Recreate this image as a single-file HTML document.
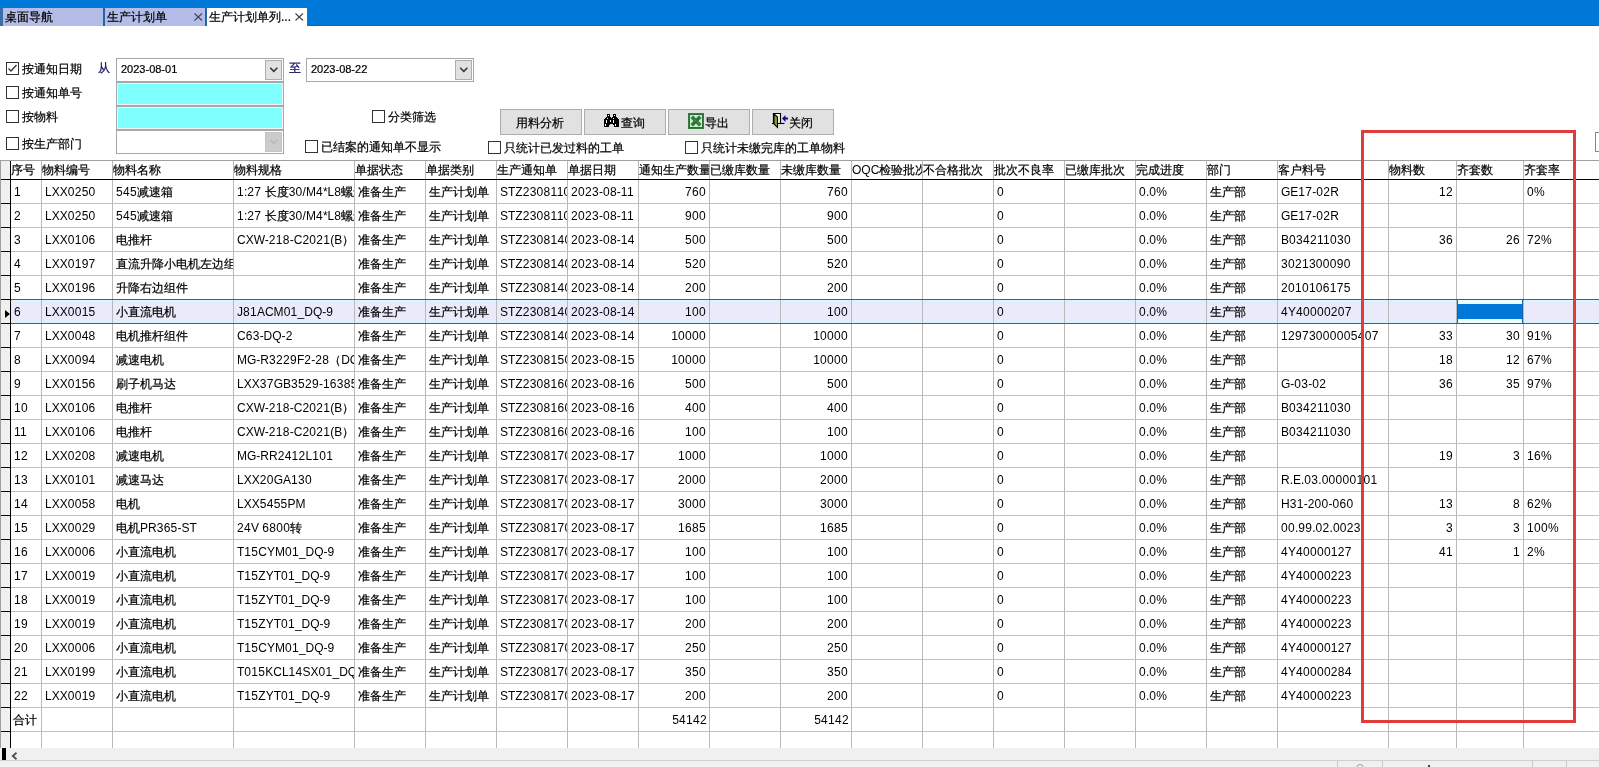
<!DOCTYPE html><html><head><meta charset="utf-8"><style>

*{box-sizing:border-box}
html,body{margin:0;padding:0}
body{width:1599px;height:767px;overflow:hidden;position:relative;background:#fff;font-family:"Liberation Sans",sans-serif;font-size:12px;color:#000;-webkit-text-stroke:0.22px #000}
.a{position:absolute}
.l{-webkit-text-stroke:0}
.d{letter-spacing:0.3px}
.t{position:absolute;white-space:nowrap;line-height:14px}
.cb{position:absolute;width:13px;height:13px;border:1px solid #333;background:#fff}
.btn{position:absolute;width:82px;height:26px;background:#e1e1e1;border:1px solid #adadad}
.vl{position:absolute;width:1px;background:#b9b9b9}
.hl{position:absolute;height:1px;background:#c3c3c3}
.c{position:absolute;white-space:nowrap;overflow:hidden;height:23px;line-height:25px}

</style></head><body><div id="w" style="position:absolute;left:0;top:0;width:1599px;height:767px;will-change:transform">
<div class="a" style="left:0;top:0;width:1599px;height:26px;background:#0078d7"></div>
<div class="a" style="left:0;top:8px;width:3px;height:18px;background:#3a6ea8"></div>
<div class="a" style="left:307px;top:25px;width:1292px;height:1px;background:#2a609c"></div>
<div class="a" style="left:3px;top:8px;width:100px;height:18px;background:#b4bde8"></div>
<div class="a" style="left:103px;top:8px;width:2px;height:18px;background:#2466a0"></div>
<div class="a" style="left:105px;top:8px;width:100px;height:18px;background:#b4bde8"></div>
<div class="a" style="left:205px;top:8px;width:2px;height:18px;background:#2466a0"></div>
<div class="a" style="left:207px;top:8px;width:100px;height:18px;background:#fff"></div>
<div class="t" style="left:5px;top:10px">桌面导航</div>
<div class="t" style="left:107px;top:10px">生产计划单</div>
<div class="t" style="left:209px;top:10px">生产计划单列...</div>
<svg class="a" style="left:194px;top:13px" width="9" height="9" viewBox="0 0 9 9"><path d="M0.5 0.5L8 7.5M8 0.5L0.5 7.5" stroke="#444" stroke-width="1.1" style="-webkit-text-stroke:0"/></svg>
<svg class="a" style="left:295px;top:13px" width="9" height="9" viewBox="0 0 9 9"><path d="M0.5 0.5L8 7.5M8 0.5L0.5 7.5" stroke="#444" stroke-width="1.1" style="-webkit-text-stroke:0"/></svg>
<div class="cb" style="left:6px;top:62px"></div><svg class="a" style="left:6px;top:62px" width="13" height="13" viewBox="0 0 13 13"><path d="M2.5 6.5L5 9L10.5 3" stroke="#333" stroke-width="1.3" fill="none"/></svg>
<div class="t" style="left:22px;top:62px;">按通知日期</div>
<div class="cb" style="left:6px;top:86px"></div>
<div class="t" style="left:22px;top:86px;">按通知单号</div>
<div class="cb" style="left:6px;top:110px"></div>
<div class="t" style="left:22px;top:110px;">按物料</div>
<div class="cb" style="left:6px;top:137px"></div>
<div class="t" style="left:22px;top:137px;">按生产部门</div>
<div class="t" style="left:98px;top:61px;color:#0c0cb4">从</div>
<div class="t" style="left:289px;top:61px;color:#0c0cb4">至</div>
<div class="a" style="left:116px;top:58px;width:168px;height:24px;border:1px solid #a8a8a8;background:#fff"></div><div class="a" style="left:265px;top:60px;width:17px;height:20px;background:#e1e1e1;border:1px solid #adadad"></div><svg class="a" style="left:269px;top:67px" width="10" height="6" viewBox="0 0 10 6"><path d="M1.2 0.8L4.8 4.4L8.4 0.8" stroke="#333" stroke-width="1.5" fill="none"/></svg><div class="t" style="left:121px;top:62px;font-size:11px">2023-08-01</div>
<div class="a" style="left:306px;top:58px;width:168px;height:24px;border:1px solid #a8a8a8;background:#fff"></div><div class="a" style="left:455px;top:60px;width:17px;height:20px;background:#e1e1e1;border:1px solid #adadad"></div><svg class="a" style="left:459px;top:67px" width="10" height="6" viewBox="0 0 10 6"><path d="M1.2 0.8L4.8 4.4L8.4 0.8" stroke="#333" stroke-width="1.5" fill="none"/></svg><div class="t" style="left:311px;top:62px;font-size:11px">2023-08-22</div>
<div class="a" style="left:116px;top:82px;width:168px;height:24px;border:1px solid #a8a8a8;box-shadow:inset 0 0 0 1px #f4f0f4;background:#80ffff"></div>
<div class="a" style="left:116px;top:106px;width:168px;height:24px;border:1px solid #a8a8a8;box-shadow:inset 0 0 0 1px #f4f0f4;background:#80ffff"></div>
<div class="a" style="left:116px;top:130px;width:168px;height:24px;border:1px solid #a8a8a8;background:#fff"></div><div class="a" style="left:265px;top:132px;width:17px;height:20px;background:#cccccc;border:1px solid #c4c4c4"></div><svg class="a" style="left:269px;top:139px" width="10" height="6" viewBox="0 0 10 6"><path d="M1.2 0.8L4.8 4.4L8.4 0.8" stroke="#b8b8b8" stroke-width="1.5" fill="none"/></svg>
<div class="cb" style="left:372px;top:110px"></div>
<div class="t" style="left:388px;top:110px;">分类筛选</div>
<div class="cb" style="left:305px;top:140px"></div>
<div class="t" style="left:321px;top:140px;">已结案的通知单不显示</div>
<div class="cb" style="left:488px;top:141px"></div>
<div class="t" style="left:504px;top:141px;">只统计已发过料的工单</div>
<div class="cb" style="left:685px;top:141px"></div>
<div class="t" style="left:701px;top:141px;">只统计未缴完库的工单物料</div>
<div class="btn" style="left:500px;top:109px"></div>
<div class="t" style="left:516px;top:116px;">用料分析</div>
<div class="btn" style="left:584px;top:109px"></div>
<div class="t" style="left:621px;top:116px;">查询</div>
<div class="btn" style="left:668px;top:109px"></div>
<div class="t" style="left:705px;top:116px;">导出</div>
<div class="btn" style="left:752px;top:109px"></div>
<div class="t" style="left:789px;top:116px;">关闭</div>
<svg class="a" style="left:604px;top:114px" width="15" height="13" viewBox="0 0 15 13" shape-rendering="crispEdges"><rect x="3" y="0" width="3" height="3" fill="#000"/><rect x="9" y="0" width="3" height="3" fill="#000"/><rect x="2" y="3" width="5" height="1" fill="#000"/><rect x="8" y="3" width="5" height="1" fill="#000"/><rect x="1" y="4" width="13" height="1" fill="#000"/><rect x="0" y="5" width="15" height="5" fill="#000"/><rect x="0" y="10" width="5" height="3" fill="#000"/><rect x="10" y="10" width="5" height="3" fill="#000"/><rect x="5" y="10" width="1" height="1" fill="#000"/><rect x="9" y="10" width="1" height="1" fill="#000"/><rect x="4" y="1" width="1" height="1" fill="#fff"/><rect x="10" y="1" width="1" height="1" fill="#fff"/><rect x="3" y="4" width="1" height="1" fill="#fff"/><rect x="9" y="4" width="1" height="1" fill="#fff"/><rect x="2" y="6" width="1" height="3" fill="#fff"/><rect x="6" y="6" width="1" height="2" fill="#fff"/><rect x="9" y="6" width="1" height="3" fill="#fff"/><rect x="1" y="10" width="1" height="2" fill="#fff"/><rect x="11" y="10" width="1" height="2" fill="#fff"/></svg>
<svg class="a" style="left:688px;top:113px" width="16" height="16" viewBox="0 0 16 16">
<rect x="0" y="0" width="16" height="16" fill="#2c6e38"/>
<rect x="0.5" y="0.5" width="15" height="15" fill="none" stroke="#3f8a4a" stroke-width="1" stroke-dasharray="1 1"/>
<rect x="2" y="2" width="12" height="12" fill="#c2f0c4"/>
<path d="M3.8 3.8L12.2 12.2M12.2 3.8L3.8 12.2" stroke="#2c7236" stroke-width="3.4"/>
<path d="M4.5 4.5L11 11" stroke="#6cc07a" stroke-width="0.8" stroke-dasharray="1 1"/>
</svg>
<svg class="a" style="left:769px;top:110px" width="22" height="21" viewBox="0 0 22 21">
<path d="M4.5 13.5V3.5H11.5V13.5" stroke="#000" stroke-width="1.2" fill="#fbfbf5"/>
<path d="M3 13.5H15.5" stroke="#000" stroke-width="1.1"/>
<path d="M5 4L8.5 7V17.5L5 14Z" fill="#8e9c22" stroke="#000" stroke-width="1.1"/>
<path d="M13 8.5L16.5 5V7.5H19V9.5H16.5V12Z" fill="#0e0e88"/>
</svg>
<div class="a" style="left:1595px;top:132px;width:10px;height:20px;border:1px solid #888;background:#fff"></div>
<div class="a" style="left:0;top:160px;width:1599px;height:1px;background:#a0a0a0"></div>
<div class="a" style="left:0;top:161px;width:10px;height:587px;background:#f0f0f0"></div>
<div class="a" style="left:0;top:161px;width:1px;height:587px;background:#a0a0a0"></div>
<div class="a" style="left:11px;top:299px;width:1588px;height:24px;background:#eaeafa"></div>
<div class="a" style="left:11px;top:300px;width:1588px;height:1px;background:#d4f6ff"></div>
<div class="a" style="left:11px;top:322px;width:1588px;height:1px;background:#d4f6ff"></div>
<div class="vl" style="left:41px;top:161px;height:587px"></div>
<div class="vl" style="left:112px;top:161px;height:587px"></div>
<div class="vl" style="left:233px;top:161px;height:587px"></div>
<div class="vl" style="left:354px;top:161px;height:587px"></div>
<div class="vl" style="left:425px;top:161px;height:587px"></div>
<div class="vl" style="left:496px;top:161px;height:587px"></div>
<div class="vl" style="left:567px;top:161px;height:587px"></div>
<div class="vl" style="left:638px;top:161px;height:587px"></div>
<div class="vl" style="left:709px;top:161px;height:587px"></div>
<div class="vl" style="left:780px;top:161px;height:587px"></div>
<div class="vl" style="left:851px;top:161px;height:587px"></div>
<div class="vl" style="left:922px;top:161px;height:587px"></div>
<div class="vl" style="left:993px;top:161px;height:587px"></div>
<div class="vl" style="left:1064px;top:161px;height:587px"></div>
<div class="vl" style="left:1135px;top:161px;height:587px"></div>
<div class="vl" style="left:1206px;top:161px;height:587px"></div>
<div class="vl" style="left:1277px;top:161px;height:587px"></div>
<div class="vl" style="left:1388px;top:161px;height:587px"></div>
<div class="vl" style="left:1456px;top:161px;height:587px"></div>
<div class="vl" style="left:1523px;top:161px;height:587px"></div>
<div class="c" style="left:11px;top:161px;width:30px;height:18px;line-height:18px">序号</div>
<div class="c" style="left:42px;top:161px;width:70px;height:18px;line-height:18px">物料编号</div>
<div class="c" style="left:113px;top:161px;width:120px;height:18px;line-height:18px">物料名称</div>
<div class="c" style="left:234px;top:161px;width:120px;height:18px;line-height:18px">物料规格</div>
<div class="c" style="left:355px;top:161px;width:70px;height:18px;line-height:18px">单据状态</div>
<div class="c" style="left:426px;top:161px;width:70px;height:18px;line-height:18px">单据类别</div>
<div class="c" style="left:497px;top:161px;width:70px;height:18px;line-height:18px">生产通知单</div>
<div class="c" style="left:568px;top:161px;width:70px;height:18px;line-height:18px">单据日期</div>
<div class="c" style="left:639px;top:161px;width:70px;height:18px;line-height:18px">通知生产数量</div>
<div class="c" style="left:710px;top:161px;width:70px;height:18px;line-height:18px">已缴库数量</div>
<div class="c" style="left:781px;top:161px;width:70px;height:18px;line-height:18px">未缴库数量</div>
<div class="c" style="left:852px;top:161px;width:70px;height:18px;line-height:18px"><span class="l">OQC</span>检验批次</div>
<div class="c" style="left:923px;top:161px;width:70px;height:18px;line-height:18px">不合格批次</div>
<div class="c" style="left:994px;top:161px;width:70px;height:18px;line-height:18px">批次不良率</div>
<div class="c" style="left:1065px;top:161px;width:70px;height:18px;line-height:18px">已缴库批次</div>
<div class="c" style="left:1136px;top:161px;width:70px;height:18px;line-height:18px">完成进度</div>
<div class="c" style="left:1207px;top:161px;width:70px;height:18px;line-height:18px">部门</div>
<div class="c" style="left:1278px;top:161px;width:84px;height:18px;line-height:18px">客户料号</div>
<div class="c" style="left:1389px;top:161px;width:67px;height:18px;line-height:18px">物料数</div>
<div class="c" style="left:1457px;top:161px;width:66px;height:18px;line-height:18px">齐套数</div>
<div class="c" style="left:1524px;top:161px;width:176px;height:18px;line-height:18px">齐套率</div>
<div class="a" style="left:1px;top:179px;width:1598px;height:1px;background:#000"></div>
<div class="hl" style="left:11px;top:203px;width:1588px"></div>
<div class="a" style="left:1px;top:203px;width:9px;height:1px;background:#000"></div>
<div class="hl" style="left:11px;top:227px;width:1588px"></div>
<div class="a" style="left:1px;top:227px;width:9px;height:1px;background:#000"></div>
<div class="hl" style="left:11px;top:251px;width:1588px"></div>
<div class="a" style="left:1px;top:251px;width:9px;height:1px;background:#000"></div>
<div class="hl" style="left:11px;top:275px;width:1588px"></div>
<div class="a" style="left:1px;top:275px;width:9px;height:1px;background:#000"></div>
<div class="hl" style="left:11px;top:299px;width:1588px"></div>
<div class="a" style="left:1px;top:299px;width:9px;height:1px;background:#000"></div>
<div class="hl" style="left:11px;top:323px;width:1588px"></div>
<div class="a" style="left:1px;top:323px;width:9px;height:1px;background:#000"></div>
<div class="hl" style="left:11px;top:347px;width:1588px"></div>
<div class="a" style="left:1px;top:347px;width:9px;height:1px;background:#000"></div>
<div class="hl" style="left:11px;top:371px;width:1588px"></div>
<div class="a" style="left:1px;top:371px;width:9px;height:1px;background:#000"></div>
<div class="hl" style="left:11px;top:395px;width:1588px"></div>
<div class="a" style="left:1px;top:395px;width:9px;height:1px;background:#000"></div>
<div class="hl" style="left:11px;top:419px;width:1588px"></div>
<div class="a" style="left:1px;top:419px;width:9px;height:1px;background:#000"></div>
<div class="hl" style="left:11px;top:443px;width:1588px"></div>
<div class="a" style="left:1px;top:443px;width:9px;height:1px;background:#000"></div>
<div class="hl" style="left:11px;top:467px;width:1588px"></div>
<div class="a" style="left:1px;top:467px;width:9px;height:1px;background:#000"></div>
<div class="hl" style="left:11px;top:491px;width:1588px"></div>
<div class="a" style="left:1px;top:491px;width:9px;height:1px;background:#000"></div>
<div class="hl" style="left:11px;top:515px;width:1588px"></div>
<div class="a" style="left:1px;top:515px;width:9px;height:1px;background:#000"></div>
<div class="hl" style="left:11px;top:539px;width:1588px"></div>
<div class="a" style="left:1px;top:539px;width:9px;height:1px;background:#000"></div>
<div class="hl" style="left:11px;top:563px;width:1588px"></div>
<div class="a" style="left:1px;top:563px;width:9px;height:1px;background:#000"></div>
<div class="hl" style="left:11px;top:587px;width:1588px"></div>
<div class="a" style="left:1px;top:587px;width:9px;height:1px;background:#000"></div>
<div class="hl" style="left:11px;top:611px;width:1588px"></div>
<div class="a" style="left:1px;top:611px;width:9px;height:1px;background:#000"></div>
<div class="hl" style="left:11px;top:635px;width:1588px"></div>
<div class="a" style="left:1px;top:635px;width:9px;height:1px;background:#000"></div>
<div class="hl" style="left:11px;top:659px;width:1588px"></div>
<div class="a" style="left:1px;top:659px;width:9px;height:1px;background:#000"></div>
<div class="hl" style="left:11px;top:683px;width:1588px"></div>
<div class="a" style="left:1px;top:683px;width:9px;height:1px;background:#000"></div>
<div class="hl" style="left:11px;top:707px;width:1588px"></div>
<div class="a" style="left:1px;top:707px;width:9px;height:1px;background:#000"></div>
<div class="hl" style="left:11px;top:731px;width:1588px"></div>
<div class="a" style="left:1px;top:731px;width:9px;height:1px;background:#000"></div>
<div class="a" style="left:11px;top:299px;width:1588px;height:1px;background:#2a64a8"></div>
<div class="a" style="left:11px;top:323px;width:1588px;height:1px;background:#2a64a8"></div>
<div class="a" style="left:10px;top:161px;width:1px;height:587px;background:#000"></div>
<svg class="a" style="left:5px;top:310px" width="5" height="8" viewBox="0 0 5 8"><path d="M0 0L5 4L0 8z" fill="#000"/></svg>
<div class="c" style="left:11px;top:180px;width:30px;padding-left:3px"><span class="l"><span class="d">1</span></span></div>
<div class="c" style="left:42px;top:180px;width:70px;padding-left:3px"><span class="l">LXX<span class="d">0250</span></span></div>
<div class="c" style="left:113px;top:180px;width:120px;padding-left:3px"><span class="l"><span class="d">545</span></span>减速箱</div>
<div class="c" style="left:234px;top:180px;width:120px;padding-left:3px"><span class="l"><span class="d">1</span>:<span class="d">27</span> </span>长度<span class="l"><span class="d">30</span>/M<span class="d">4</span>*L<span class="d">8</span></span>螺丝</div>
<div class="c" style="left:355px;top:180px;width:70px;padding-left:3px">准备生产</div>
<div class="c" style="left:426px;top:180px;width:70px;padding-left:3px">生产计划单</div>
<div class="c" style="left:497px;top:180px;width:70px;padding-left:3px"><span class="l">STZ<span class="d">2308110001</span></span></div>
<div class="c" style="left:568px;top:180px;width:70px;padding-left:3px"><span class="l"><span class="d">2023</span>-<span class="d">08</span>-<span class="d">11</span></span></div>
<div class="c" style="left:639px;top:180px;width:70px;text-align:right;padding-right:3px"><span class="l"><span class="d">760</span></span></div>
<div class="c" style="left:781px;top:180px;width:70px;text-align:right;padding-right:3px"><span class="l"><span class="d">760</span></span></div>
<div class="c" style="left:994px;top:180px;width:70px;padding-left:3px"><span class="l"><span class="d">0</span></span></div>
<div class="c" style="left:1136px;top:180px;width:70px;padding-left:3px"><span class="l"><span class="d">0</span>.<span class="d">0</span>%</span></div>
<div class="c" style="left:1207px;top:180px;width:70px;padding-left:3px">生产部</div>
<div class="c" style="left:1278px;top:180px;width:110px;padding-left:3px"><span class="l">GE<span class="d">17</span>-<span class="d">02</span>R</span></div>
<div class="c" style="left:1389px;top:180px;width:67px;text-align:right;padding-right:3px"><span class="l"><span class="d">12</span></span></div>
<div class="c" style="left:1524px;top:180px;width:176px;padding-left:3px"><span class="l"><span class="d">0</span>%</span></div>
<div class="c" style="left:11px;top:204px;width:30px;padding-left:3px"><span class="l"><span class="d">2</span></span></div>
<div class="c" style="left:42px;top:204px;width:70px;padding-left:3px"><span class="l">LXX<span class="d">0250</span></span></div>
<div class="c" style="left:113px;top:204px;width:120px;padding-left:3px"><span class="l"><span class="d">545</span></span>减速箱</div>
<div class="c" style="left:234px;top:204px;width:120px;padding-left:3px"><span class="l"><span class="d">1</span>:<span class="d">27</span> </span>长度<span class="l"><span class="d">30</span>/M<span class="d">4</span>*L<span class="d">8</span></span>螺丝</div>
<div class="c" style="left:355px;top:204px;width:70px;padding-left:3px">准备生产</div>
<div class="c" style="left:426px;top:204px;width:70px;padding-left:3px">生产计划单</div>
<div class="c" style="left:497px;top:204px;width:70px;padding-left:3px"><span class="l">STZ<span class="d">2308110002</span></span></div>
<div class="c" style="left:568px;top:204px;width:70px;padding-left:3px"><span class="l"><span class="d">2023</span>-<span class="d">08</span>-<span class="d">11</span></span></div>
<div class="c" style="left:639px;top:204px;width:70px;text-align:right;padding-right:3px"><span class="l"><span class="d">900</span></span></div>
<div class="c" style="left:781px;top:204px;width:70px;text-align:right;padding-right:3px"><span class="l"><span class="d">900</span></span></div>
<div class="c" style="left:994px;top:204px;width:70px;padding-left:3px"><span class="l"><span class="d">0</span></span></div>
<div class="c" style="left:1136px;top:204px;width:70px;padding-left:3px"><span class="l"><span class="d">0</span>.<span class="d">0</span>%</span></div>
<div class="c" style="left:1207px;top:204px;width:70px;padding-left:3px">生产部</div>
<div class="c" style="left:1278px;top:204px;width:110px;padding-left:3px"><span class="l">GE<span class="d">17</span>-<span class="d">02</span>R</span></div>
<div class="c" style="left:11px;top:228px;width:30px;padding-left:3px"><span class="l"><span class="d">3</span></span></div>
<div class="c" style="left:42px;top:228px;width:70px;padding-left:3px"><span class="l">LXX<span class="d">0106</span></span></div>
<div class="c" style="left:113px;top:228px;width:120px;padding-left:3px">电推杆</div>
<div class="c" style="left:234px;top:228px;width:120px;padding-left:3px"><span class="l">CXW-<span class="d">218</span>-C<span class="d">2021</span>(B</span>）</div>
<div class="c" style="left:355px;top:228px;width:70px;padding-left:3px">准备生产</div>
<div class="c" style="left:426px;top:228px;width:70px;padding-left:3px">生产计划单</div>
<div class="c" style="left:497px;top:228px;width:70px;padding-left:3px"><span class="l">STZ<span class="d">2308140001</span></span></div>
<div class="c" style="left:568px;top:228px;width:70px;padding-left:3px"><span class="l"><span class="d">2023</span>-<span class="d">08</span>-<span class="d">14</span></span></div>
<div class="c" style="left:639px;top:228px;width:70px;text-align:right;padding-right:3px"><span class="l"><span class="d">500</span></span></div>
<div class="c" style="left:781px;top:228px;width:70px;text-align:right;padding-right:3px"><span class="l"><span class="d">500</span></span></div>
<div class="c" style="left:994px;top:228px;width:70px;padding-left:3px"><span class="l"><span class="d">0</span></span></div>
<div class="c" style="left:1136px;top:228px;width:70px;padding-left:3px"><span class="l"><span class="d">0</span>.<span class="d">0</span>%</span></div>
<div class="c" style="left:1207px;top:228px;width:70px;padding-left:3px">生产部</div>
<div class="c" style="left:1278px;top:228px;width:110px;padding-left:3px"><span class="l">B<span class="d">034211030</span></span></div>
<div class="c" style="left:1389px;top:228px;width:67px;text-align:right;padding-right:3px"><span class="l"><span class="d">36</span></span></div>
<div class="c" style="left:1457px;top:228px;width:66px;text-align:right;padding-right:3px"><span class="l"><span class="d">26</span></span></div>
<div class="c" style="left:1524px;top:228px;width:176px;padding-left:3px"><span class="l"><span class="d">72</span>%</span></div>
<div class="c" style="left:11px;top:252px;width:30px;padding-left:3px"><span class="l"><span class="d">4</span></span></div>
<div class="c" style="left:42px;top:252px;width:70px;padding-left:3px"><span class="l">LXX<span class="d">0197</span></span></div>
<div class="c" style="left:113px;top:252px;width:120px;padding-left:3px">直流升降小电机左边组件</div>
<div class="c" style="left:355px;top:252px;width:70px;padding-left:3px">准备生产</div>
<div class="c" style="left:426px;top:252px;width:70px;padding-left:3px">生产计划单</div>
<div class="c" style="left:497px;top:252px;width:70px;padding-left:3px"><span class="l">STZ<span class="d">2308140002</span></span></div>
<div class="c" style="left:568px;top:252px;width:70px;padding-left:3px"><span class="l"><span class="d">2023</span>-<span class="d">08</span>-<span class="d">14</span></span></div>
<div class="c" style="left:639px;top:252px;width:70px;text-align:right;padding-right:3px"><span class="l"><span class="d">520</span></span></div>
<div class="c" style="left:781px;top:252px;width:70px;text-align:right;padding-right:3px"><span class="l"><span class="d">520</span></span></div>
<div class="c" style="left:994px;top:252px;width:70px;padding-left:3px"><span class="l"><span class="d">0</span></span></div>
<div class="c" style="left:1136px;top:252px;width:70px;padding-left:3px"><span class="l"><span class="d">0</span>.<span class="d">0</span>%</span></div>
<div class="c" style="left:1207px;top:252px;width:70px;padding-left:3px">生产部</div>
<div class="c" style="left:1278px;top:252px;width:110px;padding-left:3px"><span class="l"><span class="d">3021300090</span></span></div>
<div class="c" style="left:11px;top:276px;width:30px;padding-left:3px"><span class="l"><span class="d">5</span></span></div>
<div class="c" style="left:42px;top:276px;width:70px;padding-left:3px"><span class="l">LXX<span class="d">0196</span></span></div>
<div class="c" style="left:113px;top:276px;width:120px;padding-left:3px">升降右边组件</div>
<div class="c" style="left:355px;top:276px;width:70px;padding-left:3px">准备生产</div>
<div class="c" style="left:426px;top:276px;width:70px;padding-left:3px">生产计划单</div>
<div class="c" style="left:497px;top:276px;width:70px;padding-left:3px"><span class="l">STZ<span class="d">2308140003</span></span></div>
<div class="c" style="left:568px;top:276px;width:70px;padding-left:3px"><span class="l"><span class="d">2023</span>-<span class="d">08</span>-<span class="d">14</span></span></div>
<div class="c" style="left:639px;top:276px;width:70px;text-align:right;padding-right:3px"><span class="l"><span class="d">200</span></span></div>
<div class="c" style="left:781px;top:276px;width:70px;text-align:right;padding-right:3px"><span class="l"><span class="d">200</span></span></div>
<div class="c" style="left:994px;top:276px;width:70px;padding-left:3px"><span class="l"><span class="d">0</span></span></div>
<div class="c" style="left:1136px;top:276px;width:70px;padding-left:3px"><span class="l"><span class="d">0</span>.<span class="d">0</span>%</span></div>
<div class="c" style="left:1207px;top:276px;width:70px;padding-left:3px">生产部</div>
<div class="c" style="left:1278px;top:276px;width:110px;padding-left:3px"><span class="l"><span class="d">2010106175</span></span></div>
<div class="c" style="left:11px;top:300px;width:30px;padding-left:3px"><span class="l"><span class="d">6</span></span></div>
<div class="c" style="left:42px;top:300px;width:70px;padding-left:3px"><span class="l">LXX<span class="d">0015</span></span></div>
<div class="c" style="left:113px;top:300px;width:120px;padding-left:3px">小直流电机</div>
<div class="c" style="left:234px;top:300px;width:120px;padding-left:3px"><span class="l">J<span class="d">81</span>ACM<span class="d">01</span>_DQ-<span class="d">9</span></span></div>
<div class="c" style="left:355px;top:300px;width:70px;padding-left:3px">准备生产</div>
<div class="c" style="left:426px;top:300px;width:70px;padding-left:3px">生产计划单</div>
<div class="c" style="left:497px;top:300px;width:70px;padding-left:3px"><span class="l">STZ<span class="d">2308140004</span></span></div>
<div class="c" style="left:568px;top:300px;width:70px;padding-left:3px"><span class="l"><span class="d">2023</span>-<span class="d">08</span>-<span class="d">14</span></span></div>
<div class="c" style="left:639px;top:300px;width:70px;text-align:right;padding-right:3px"><span class="l"><span class="d">100</span></span></div>
<div class="c" style="left:781px;top:300px;width:70px;text-align:right;padding-right:3px"><span class="l"><span class="d">100</span></span></div>
<div class="c" style="left:994px;top:300px;width:70px;padding-left:3px"><span class="l"><span class="d">0</span></span></div>
<div class="c" style="left:1136px;top:300px;width:70px;padding-left:3px"><span class="l"><span class="d">0</span>.<span class="d">0</span>%</span></div>
<div class="c" style="left:1207px;top:300px;width:70px;padding-left:3px">生产部</div>
<div class="c" style="left:1278px;top:300px;width:110px;padding-left:3px"><span class="l"><span class="d">4</span>Y<span class="d">40000207</span></span></div>
<div class="c" style="left:11px;top:324px;width:30px;padding-left:3px"><span class="l"><span class="d">7</span></span></div>
<div class="c" style="left:42px;top:324px;width:70px;padding-left:3px"><span class="l">LXX<span class="d">0048</span></span></div>
<div class="c" style="left:113px;top:324px;width:120px;padding-left:3px">电机推杆组件</div>
<div class="c" style="left:234px;top:324px;width:120px;padding-left:3px"><span class="l">C<span class="d">63</span>-DQ-<span class="d">2</span></span></div>
<div class="c" style="left:355px;top:324px;width:70px;padding-left:3px">准备生产</div>
<div class="c" style="left:426px;top:324px;width:70px;padding-left:3px">生产计划单</div>
<div class="c" style="left:497px;top:324px;width:70px;padding-left:3px"><span class="l">STZ<span class="d">2308140005</span></span></div>
<div class="c" style="left:568px;top:324px;width:70px;padding-left:3px"><span class="l"><span class="d">2023</span>-<span class="d">08</span>-<span class="d">14</span></span></div>
<div class="c" style="left:639px;top:324px;width:70px;text-align:right;padding-right:3px"><span class="l"><span class="d">10000</span></span></div>
<div class="c" style="left:781px;top:324px;width:70px;text-align:right;padding-right:3px"><span class="l"><span class="d">10000</span></span></div>
<div class="c" style="left:994px;top:324px;width:70px;padding-left:3px"><span class="l"><span class="d">0</span></span></div>
<div class="c" style="left:1136px;top:324px;width:70px;padding-left:3px"><span class="l"><span class="d">0</span>.<span class="d">0</span>%</span></div>
<div class="c" style="left:1207px;top:324px;width:70px;padding-left:3px">生产部</div>
<div class="c" style="left:1278px;top:324px;width:110px;padding-left:3px"><span class="l"><span class="d">12973000005407</span></span></div>
<div class="c" style="left:1389px;top:324px;width:67px;text-align:right;padding-right:3px"><span class="l"><span class="d">33</span></span></div>
<div class="c" style="left:1457px;top:324px;width:66px;text-align:right;padding-right:3px"><span class="l"><span class="d">30</span></span></div>
<div class="c" style="left:1524px;top:324px;width:176px;padding-left:3px"><span class="l"><span class="d">91</span>%</span></div>
<div class="c" style="left:11px;top:348px;width:30px;padding-left:3px"><span class="l"><span class="d">8</span></span></div>
<div class="c" style="left:42px;top:348px;width:70px;padding-left:3px"><span class="l">LXX<span class="d">0094</span></span></div>
<div class="c" style="left:113px;top:348px;width:120px;padding-left:3px">减速电机</div>
<div class="c" style="left:234px;top:348px;width:120px;padding-left:3px"><span class="l">MG-R<span class="d">3229</span>F<span class="d">2</span>-<span class="d">28</span></span>（<span class="l">DC<span class="d">24</span>V</span>）</div>
<div class="c" style="left:355px;top:348px;width:70px;padding-left:3px">准备生产</div>
<div class="c" style="left:426px;top:348px;width:70px;padding-left:3px">生产计划单</div>
<div class="c" style="left:497px;top:348px;width:70px;padding-left:3px"><span class="l">STZ<span class="d">2308150001</span></span></div>
<div class="c" style="left:568px;top:348px;width:70px;padding-left:3px"><span class="l"><span class="d">2023</span>-<span class="d">08</span>-<span class="d">15</span></span></div>
<div class="c" style="left:639px;top:348px;width:70px;text-align:right;padding-right:3px"><span class="l"><span class="d">10000</span></span></div>
<div class="c" style="left:781px;top:348px;width:70px;text-align:right;padding-right:3px"><span class="l"><span class="d">10000</span></span></div>
<div class="c" style="left:994px;top:348px;width:70px;padding-left:3px"><span class="l"><span class="d">0</span></span></div>
<div class="c" style="left:1136px;top:348px;width:70px;padding-left:3px"><span class="l"><span class="d">0</span>.<span class="d">0</span>%</span></div>
<div class="c" style="left:1207px;top:348px;width:70px;padding-left:3px">生产部</div>
<div class="c" style="left:1389px;top:348px;width:67px;text-align:right;padding-right:3px"><span class="l"><span class="d">18</span></span></div>
<div class="c" style="left:1457px;top:348px;width:66px;text-align:right;padding-right:3px"><span class="l"><span class="d">12</span></span></div>
<div class="c" style="left:1524px;top:348px;width:176px;padding-left:3px"><span class="l"><span class="d">67</span>%</span></div>
<div class="c" style="left:11px;top:372px;width:30px;padding-left:3px"><span class="l"><span class="d">9</span></span></div>
<div class="c" style="left:42px;top:372px;width:70px;padding-left:3px"><span class="l">LXX<span class="d">0156</span></span></div>
<div class="c" style="left:113px;top:372px;width:120px;padding-left:3px">刷子机马达</div>
<div class="c" style="left:234px;top:372px;width:120px;padding-left:3px"><span class="l">LXX<span class="d">37</span>GB<span class="d">3529</span>-<span class="d">16385</span></span></div>
<div class="c" style="left:355px;top:372px;width:70px;padding-left:3px">准备生产</div>
<div class="c" style="left:426px;top:372px;width:70px;padding-left:3px">生产计划单</div>
<div class="c" style="left:497px;top:372px;width:70px;padding-left:3px"><span class="l">STZ<span class="d">2308160001</span></span></div>
<div class="c" style="left:568px;top:372px;width:70px;padding-left:3px"><span class="l"><span class="d">2023</span>-<span class="d">08</span>-<span class="d">16</span></span></div>
<div class="c" style="left:639px;top:372px;width:70px;text-align:right;padding-right:3px"><span class="l"><span class="d">500</span></span></div>
<div class="c" style="left:781px;top:372px;width:70px;text-align:right;padding-right:3px"><span class="l"><span class="d">500</span></span></div>
<div class="c" style="left:994px;top:372px;width:70px;padding-left:3px"><span class="l"><span class="d">0</span></span></div>
<div class="c" style="left:1136px;top:372px;width:70px;padding-left:3px"><span class="l"><span class="d">0</span>.<span class="d">0</span>%</span></div>
<div class="c" style="left:1207px;top:372px;width:70px;padding-left:3px">生产部</div>
<div class="c" style="left:1278px;top:372px;width:110px;padding-left:3px"><span class="l">G-<span class="d">03</span>-<span class="d">02</span></span></div>
<div class="c" style="left:1389px;top:372px;width:67px;text-align:right;padding-right:3px"><span class="l"><span class="d">36</span></span></div>
<div class="c" style="left:1457px;top:372px;width:66px;text-align:right;padding-right:3px"><span class="l"><span class="d">35</span></span></div>
<div class="c" style="left:1524px;top:372px;width:176px;padding-left:3px"><span class="l"><span class="d">97</span>%</span></div>
<div class="c" style="left:11px;top:396px;width:30px;padding-left:3px"><span class="l"><span class="d">10</span></span></div>
<div class="c" style="left:42px;top:396px;width:70px;padding-left:3px"><span class="l">LXX<span class="d">0106</span></span></div>
<div class="c" style="left:113px;top:396px;width:120px;padding-left:3px">电推杆</div>
<div class="c" style="left:234px;top:396px;width:120px;padding-left:3px"><span class="l">CXW-<span class="d">218</span>-C<span class="d">2021</span>(B</span>）</div>
<div class="c" style="left:355px;top:396px;width:70px;padding-left:3px">准备生产</div>
<div class="c" style="left:426px;top:396px;width:70px;padding-left:3px">生产计划单</div>
<div class="c" style="left:497px;top:396px;width:70px;padding-left:3px"><span class="l">STZ<span class="d">2308160002</span></span></div>
<div class="c" style="left:568px;top:396px;width:70px;padding-left:3px"><span class="l"><span class="d">2023</span>-<span class="d">08</span>-<span class="d">16</span></span></div>
<div class="c" style="left:639px;top:396px;width:70px;text-align:right;padding-right:3px"><span class="l"><span class="d">400</span></span></div>
<div class="c" style="left:781px;top:396px;width:70px;text-align:right;padding-right:3px"><span class="l"><span class="d">400</span></span></div>
<div class="c" style="left:994px;top:396px;width:70px;padding-left:3px"><span class="l"><span class="d">0</span></span></div>
<div class="c" style="left:1136px;top:396px;width:70px;padding-left:3px"><span class="l"><span class="d">0</span>.<span class="d">0</span>%</span></div>
<div class="c" style="left:1207px;top:396px;width:70px;padding-left:3px">生产部</div>
<div class="c" style="left:1278px;top:396px;width:110px;padding-left:3px"><span class="l">B<span class="d">034211030</span></span></div>
<div class="c" style="left:11px;top:420px;width:30px;padding-left:3px"><span class="l"><span class="d">11</span></span></div>
<div class="c" style="left:42px;top:420px;width:70px;padding-left:3px"><span class="l">LXX<span class="d">0106</span></span></div>
<div class="c" style="left:113px;top:420px;width:120px;padding-left:3px">电推杆</div>
<div class="c" style="left:234px;top:420px;width:120px;padding-left:3px"><span class="l">CXW-<span class="d">218</span>-C<span class="d">2021</span>(B</span>）</div>
<div class="c" style="left:355px;top:420px;width:70px;padding-left:3px">准备生产</div>
<div class="c" style="left:426px;top:420px;width:70px;padding-left:3px">生产计划单</div>
<div class="c" style="left:497px;top:420px;width:70px;padding-left:3px"><span class="l">STZ<span class="d">2308160003</span></span></div>
<div class="c" style="left:568px;top:420px;width:70px;padding-left:3px"><span class="l"><span class="d">2023</span>-<span class="d">08</span>-<span class="d">16</span></span></div>
<div class="c" style="left:639px;top:420px;width:70px;text-align:right;padding-right:3px"><span class="l"><span class="d">100</span></span></div>
<div class="c" style="left:781px;top:420px;width:70px;text-align:right;padding-right:3px"><span class="l"><span class="d">100</span></span></div>
<div class="c" style="left:994px;top:420px;width:70px;padding-left:3px"><span class="l"><span class="d">0</span></span></div>
<div class="c" style="left:1136px;top:420px;width:70px;padding-left:3px"><span class="l"><span class="d">0</span>.<span class="d">0</span>%</span></div>
<div class="c" style="left:1207px;top:420px;width:70px;padding-left:3px">生产部</div>
<div class="c" style="left:1278px;top:420px;width:110px;padding-left:3px"><span class="l">B<span class="d">034211030</span></span></div>
<div class="c" style="left:11px;top:444px;width:30px;padding-left:3px"><span class="l"><span class="d">12</span></span></div>
<div class="c" style="left:42px;top:444px;width:70px;padding-left:3px"><span class="l">LXX<span class="d">0208</span></span></div>
<div class="c" style="left:113px;top:444px;width:120px;padding-left:3px">减速电机</div>
<div class="c" style="left:234px;top:444px;width:120px;padding-left:3px"><span class="l">MG-RR<span class="d">2412</span>L<span class="d">101</span></span></div>
<div class="c" style="left:355px;top:444px;width:70px;padding-left:3px">准备生产</div>
<div class="c" style="left:426px;top:444px;width:70px;padding-left:3px">生产计划单</div>
<div class="c" style="left:497px;top:444px;width:70px;padding-left:3px"><span class="l">STZ<span class="d">2308170001</span></span></div>
<div class="c" style="left:568px;top:444px;width:70px;padding-left:3px"><span class="l"><span class="d">2023</span>-<span class="d">08</span>-<span class="d">17</span></span></div>
<div class="c" style="left:639px;top:444px;width:70px;text-align:right;padding-right:3px"><span class="l"><span class="d">1000</span></span></div>
<div class="c" style="left:781px;top:444px;width:70px;text-align:right;padding-right:3px"><span class="l"><span class="d">1000</span></span></div>
<div class="c" style="left:994px;top:444px;width:70px;padding-left:3px"><span class="l"><span class="d">0</span></span></div>
<div class="c" style="left:1136px;top:444px;width:70px;padding-left:3px"><span class="l"><span class="d">0</span>.<span class="d">0</span>%</span></div>
<div class="c" style="left:1207px;top:444px;width:70px;padding-left:3px">生产部</div>
<div class="c" style="left:1389px;top:444px;width:67px;text-align:right;padding-right:3px"><span class="l"><span class="d">19</span></span></div>
<div class="c" style="left:1457px;top:444px;width:66px;text-align:right;padding-right:3px"><span class="l"><span class="d">3</span></span></div>
<div class="c" style="left:1524px;top:444px;width:176px;padding-left:3px"><span class="l"><span class="d">16</span>%</span></div>
<div class="c" style="left:11px;top:468px;width:30px;padding-left:3px"><span class="l"><span class="d">13</span></span></div>
<div class="c" style="left:42px;top:468px;width:70px;padding-left:3px"><span class="l">LXX<span class="d">0101</span></span></div>
<div class="c" style="left:113px;top:468px;width:120px;padding-left:3px">减速马达</div>
<div class="c" style="left:234px;top:468px;width:120px;padding-left:3px"><span class="l">LXX<span class="d">20</span>GA<span class="d">130</span></span></div>
<div class="c" style="left:355px;top:468px;width:70px;padding-left:3px">准备生产</div>
<div class="c" style="left:426px;top:468px;width:70px;padding-left:3px">生产计划单</div>
<div class="c" style="left:497px;top:468px;width:70px;padding-left:3px"><span class="l">STZ<span class="d">2308170002</span></span></div>
<div class="c" style="left:568px;top:468px;width:70px;padding-left:3px"><span class="l"><span class="d">2023</span>-<span class="d">08</span>-<span class="d">17</span></span></div>
<div class="c" style="left:639px;top:468px;width:70px;text-align:right;padding-right:3px"><span class="l"><span class="d">2000</span></span></div>
<div class="c" style="left:781px;top:468px;width:70px;text-align:right;padding-right:3px"><span class="l"><span class="d">2000</span></span></div>
<div class="c" style="left:994px;top:468px;width:70px;padding-left:3px"><span class="l"><span class="d">0</span></span></div>
<div class="c" style="left:1136px;top:468px;width:70px;padding-left:3px"><span class="l"><span class="d">0</span>.<span class="d">0</span>%</span></div>
<div class="c" style="left:1207px;top:468px;width:70px;padding-left:3px">生产部</div>
<div class="c" style="left:1278px;top:468px;width:110px;padding-left:3px"><span class="l">R.E.<span class="d">03</span>.<span class="d">00000101</span></span></div>
<div class="c" style="left:11px;top:492px;width:30px;padding-left:3px"><span class="l"><span class="d">14</span></span></div>
<div class="c" style="left:42px;top:492px;width:70px;padding-left:3px"><span class="l">LXX<span class="d">0058</span></span></div>
<div class="c" style="left:113px;top:492px;width:120px;padding-left:3px">电机</div>
<div class="c" style="left:234px;top:492px;width:120px;padding-left:3px"><span class="l">LXX<span class="d">5455</span>PM</span></div>
<div class="c" style="left:355px;top:492px;width:70px;padding-left:3px">准备生产</div>
<div class="c" style="left:426px;top:492px;width:70px;padding-left:3px">生产计划单</div>
<div class="c" style="left:497px;top:492px;width:70px;padding-left:3px"><span class="l">STZ<span class="d">2308170003</span></span></div>
<div class="c" style="left:568px;top:492px;width:70px;padding-left:3px"><span class="l"><span class="d">2023</span>-<span class="d">08</span>-<span class="d">17</span></span></div>
<div class="c" style="left:639px;top:492px;width:70px;text-align:right;padding-right:3px"><span class="l"><span class="d">3000</span></span></div>
<div class="c" style="left:781px;top:492px;width:70px;text-align:right;padding-right:3px"><span class="l"><span class="d">3000</span></span></div>
<div class="c" style="left:994px;top:492px;width:70px;padding-left:3px"><span class="l"><span class="d">0</span></span></div>
<div class="c" style="left:1136px;top:492px;width:70px;padding-left:3px"><span class="l"><span class="d">0</span>.<span class="d">0</span>%</span></div>
<div class="c" style="left:1207px;top:492px;width:70px;padding-left:3px">生产部</div>
<div class="c" style="left:1278px;top:492px;width:110px;padding-left:3px"><span class="l">H<span class="d">31</span>-<span class="d">200</span>-<span class="d">060</span></span></div>
<div class="c" style="left:1389px;top:492px;width:67px;text-align:right;padding-right:3px"><span class="l"><span class="d">13</span></span></div>
<div class="c" style="left:1457px;top:492px;width:66px;text-align:right;padding-right:3px"><span class="l"><span class="d">8</span></span></div>
<div class="c" style="left:1524px;top:492px;width:176px;padding-left:3px"><span class="l"><span class="d">62</span>%</span></div>
<div class="c" style="left:11px;top:516px;width:30px;padding-left:3px"><span class="l"><span class="d">15</span></span></div>
<div class="c" style="left:42px;top:516px;width:70px;padding-left:3px"><span class="l">LXX<span class="d">0029</span></span></div>
<div class="c" style="left:113px;top:516px;width:120px;padding-left:3px">电机<span class="l">PR<span class="d">365</span>-ST</span></div>
<div class="c" style="left:234px;top:516px;width:120px;padding-left:3px"><span class="l"><span class="d">24</span>V <span class="d">6800</span></span>转</div>
<div class="c" style="left:355px;top:516px;width:70px;padding-left:3px">准备生产</div>
<div class="c" style="left:426px;top:516px;width:70px;padding-left:3px">生产计划单</div>
<div class="c" style="left:497px;top:516px;width:70px;padding-left:3px"><span class="l">STZ<span class="d">2308170004</span></span></div>
<div class="c" style="left:568px;top:516px;width:70px;padding-left:3px"><span class="l"><span class="d">2023</span>-<span class="d">08</span>-<span class="d">17</span></span></div>
<div class="c" style="left:639px;top:516px;width:70px;text-align:right;padding-right:3px"><span class="l"><span class="d">1685</span></span></div>
<div class="c" style="left:781px;top:516px;width:70px;text-align:right;padding-right:3px"><span class="l"><span class="d">1685</span></span></div>
<div class="c" style="left:994px;top:516px;width:70px;padding-left:3px"><span class="l"><span class="d">0</span></span></div>
<div class="c" style="left:1136px;top:516px;width:70px;padding-left:3px"><span class="l"><span class="d">0</span>.<span class="d">0</span>%</span></div>
<div class="c" style="left:1207px;top:516px;width:70px;padding-left:3px">生产部</div>
<div class="c" style="left:1278px;top:516px;width:110px;padding-left:3px"><span class="l"><span class="d">00</span>.<span class="d">99</span>.<span class="d">02</span>.<span class="d">0023</span></span></div>
<div class="c" style="left:1389px;top:516px;width:67px;text-align:right;padding-right:3px"><span class="l"><span class="d">3</span></span></div>
<div class="c" style="left:1457px;top:516px;width:66px;text-align:right;padding-right:3px"><span class="l"><span class="d">3</span></span></div>
<div class="c" style="left:1524px;top:516px;width:176px;padding-left:3px"><span class="l"><span class="d">100</span>%</span></div>
<div class="c" style="left:11px;top:540px;width:30px;padding-left:3px"><span class="l"><span class="d">16</span></span></div>
<div class="c" style="left:42px;top:540px;width:70px;padding-left:3px"><span class="l">LXX<span class="d">0006</span></span></div>
<div class="c" style="left:113px;top:540px;width:120px;padding-left:3px">小直流电机</div>
<div class="c" style="left:234px;top:540px;width:120px;padding-left:3px"><span class="l">T<span class="d">15</span>CYM<span class="d">01</span>_DQ-<span class="d">9</span></span></div>
<div class="c" style="left:355px;top:540px;width:70px;padding-left:3px">准备生产</div>
<div class="c" style="left:426px;top:540px;width:70px;padding-left:3px">生产计划单</div>
<div class="c" style="left:497px;top:540px;width:70px;padding-left:3px"><span class="l">STZ<span class="d">2308170005</span></span></div>
<div class="c" style="left:568px;top:540px;width:70px;padding-left:3px"><span class="l"><span class="d">2023</span>-<span class="d">08</span>-<span class="d">17</span></span></div>
<div class="c" style="left:639px;top:540px;width:70px;text-align:right;padding-right:3px"><span class="l"><span class="d">100</span></span></div>
<div class="c" style="left:781px;top:540px;width:70px;text-align:right;padding-right:3px"><span class="l"><span class="d">100</span></span></div>
<div class="c" style="left:994px;top:540px;width:70px;padding-left:3px"><span class="l"><span class="d">0</span></span></div>
<div class="c" style="left:1136px;top:540px;width:70px;padding-left:3px"><span class="l"><span class="d">0</span>.<span class="d">0</span>%</span></div>
<div class="c" style="left:1207px;top:540px;width:70px;padding-left:3px">生产部</div>
<div class="c" style="left:1278px;top:540px;width:110px;padding-left:3px"><span class="l"><span class="d">4</span>Y<span class="d">40000127</span></span></div>
<div class="c" style="left:1389px;top:540px;width:67px;text-align:right;padding-right:3px"><span class="l"><span class="d">41</span></span></div>
<div class="c" style="left:1457px;top:540px;width:66px;text-align:right;padding-right:3px"><span class="l"><span class="d">1</span></span></div>
<div class="c" style="left:1524px;top:540px;width:176px;padding-left:3px"><span class="l"><span class="d">2</span>%</span></div>
<div class="c" style="left:11px;top:564px;width:30px;padding-left:3px"><span class="l"><span class="d">17</span></span></div>
<div class="c" style="left:42px;top:564px;width:70px;padding-left:3px"><span class="l">LXX<span class="d">0019</span></span></div>
<div class="c" style="left:113px;top:564px;width:120px;padding-left:3px">小直流电机</div>
<div class="c" style="left:234px;top:564px;width:120px;padding-left:3px"><span class="l">T<span class="d">15</span>ZYT<span class="d">01</span>_DQ-<span class="d">9</span></span></div>
<div class="c" style="left:355px;top:564px;width:70px;padding-left:3px">准备生产</div>
<div class="c" style="left:426px;top:564px;width:70px;padding-left:3px">生产计划单</div>
<div class="c" style="left:497px;top:564px;width:70px;padding-left:3px"><span class="l">STZ<span class="d">2308170006</span></span></div>
<div class="c" style="left:568px;top:564px;width:70px;padding-left:3px"><span class="l"><span class="d">2023</span>-<span class="d">08</span>-<span class="d">17</span></span></div>
<div class="c" style="left:639px;top:564px;width:70px;text-align:right;padding-right:3px"><span class="l"><span class="d">100</span></span></div>
<div class="c" style="left:781px;top:564px;width:70px;text-align:right;padding-right:3px"><span class="l"><span class="d">100</span></span></div>
<div class="c" style="left:994px;top:564px;width:70px;padding-left:3px"><span class="l"><span class="d">0</span></span></div>
<div class="c" style="left:1136px;top:564px;width:70px;padding-left:3px"><span class="l"><span class="d">0</span>.<span class="d">0</span>%</span></div>
<div class="c" style="left:1207px;top:564px;width:70px;padding-left:3px">生产部</div>
<div class="c" style="left:1278px;top:564px;width:110px;padding-left:3px"><span class="l"><span class="d">4</span>Y<span class="d">40000223</span></span></div>
<div class="c" style="left:11px;top:588px;width:30px;padding-left:3px"><span class="l"><span class="d">18</span></span></div>
<div class="c" style="left:42px;top:588px;width:70px;padding-left:3px"><span class="l">LXX<span class="d">0019</span></span></div>
<div class="c" style="left:113px;top:588px;width:120px;padding-left:3px">小直流电机</div>
<div class="c" style="left:234px;top:588px;width:120px;padding-left:3px"><span class="l">T<span class="d">15</span>ZYT<span class="d">01</span>_DQ-<span class="d">9</span></span></div>
<div class="c" style="left:355px;top:588px;width:70px;padding-left:3px">准备生产</div>
<div class="c" style="left:426px;top:588px;width:70px;padding-left:3px">生产计划单</div>
<div class="c" style="left:497px;top:588px;width:70px;padding-left:3px"><span class="l">STZ<span class="d">2308170007</span></span></div>
<div class="c" style="left:568px;top:588px;width:70px;padding-left:3px"><span class="l"><span class="d">2023</span>-<span class="d">08</span>-<span class="d">17</span></span></div>
<div class="c" style="left:639px;top:588px;width:70px;text-align:right;padding-right:3px"><span class="l"><span class="d">100</span></span></div>
<div class="c" style="left:781px;top:588px;width:70px;text-align:right;padding-right:3px"><span class="l"><span class="d">100</span></span></div>
<div class="c" style="left:994px;top:588px;width:70px;padding-left:3px"><span class="l"><span class="d">0</span></span></div>
<div class="c" style="left:1136px;top:588px;width:70px;padding-left:3px"><span class="l"><span class="d">0</span>.<span class="d">0</span>%</span></div>
<div class="c" style="left:1207px;top:588px;width:70px;padding-left:3px">生产部</div>
<div class="c" style="left:1278px;top:588px;width:110px;padding-left:3px"><span class="l"><span class="d">4</span>Y<span class="d">40000223</span></span></div>
<div class="c" style="left:11px;top:612px;width:30px;padding-left:3px"><span class="l"><span class="d">19</span></span></div>
<div class="c" style="left:42px;top:612px;width:70px;padding-left:3px"><span class="l">LXX<span class="d">0019</span></span></div>
<div class="c" style="left:113px;top:612px;width:120px;padding-left:3px">小直流电机</div>
<div class="c" style="left:234px;top:612px;width:120px;padding-left:3px"><span class="l">T<span class="d">15</span>ZYT<span class="d">01</span>_DQ-<span class="d">9</span></span></div>
<div class="c" style="left:355px;top:612px;width:70px;padding-left:3px">准备生产</div>
<div class="c" style="left:426px;top:612px;width:70px;padding-left:3px">生产计划单</div>
<div class="c" style="left:497px;top:612px;width:70px;padding-left:3px"><span class="l">STZ<span class="d">2308170008</span></span></div>
<div class="c" style="left:568px;top:612px;width:70px;padding-left:3px"><span class="l"><span class="d">2023</span>-<span class="d">08</span>-<span class="d">17</span></span></div>
<div class="c" style="left:639px;top:612px;width:70px;text-align:right;padding-right:3px"><span class="l"><span class="d">200</span></span></div>
<div class="c" style="left:781px;top:612px;width:70px;text-align:right;padding-right:3px"><span class="l"><span class="d">200</span></span></div>
<div class="c" style="left:994px;top:612px;width:70px;padding-left:3px"><span class="l"><span class="d">0</span></span></div>
<div class="c" style="left:1136px;top:612px;width:70px;padding-left:3px"><span class="l"><span class="d">0</span>.<span class="d">0</span>%</span></div>
<div class="c" style="left:1207px;top:612px;width:70px;padding-left:3px">生产部</div>
<div class="c" style="left:1278px;top:612px;width:110px;padding-left:3px"><span class="l"><span class="d">4</span>Y<span class="d">40000223</span></span></div>
<div class="c" style="left:11px;top:636px;width:30px;padding-left:3px"><span class="l"><span class="d">20</span></span></div>
<div class="c" style="left:42px;top:636px;width:70px;padding-left:3px"><span class="l">LXX<span class="d">0006</span></span></div>
<div class="c" style="left:113px;top:636px;width:120px;padding-left:3px">小直流电机</div>
<div class="c" style="left:234px;top:636px;width:120px;padding-left:3px"><span class="l">T<span class="d">15</span>CYM<span class="d">01</span>_DQ-<span class="d">9</span></span></div>
<div class="c" style="left:355px;top:636px;width:70px;padding-left:3px">准备生产</div>
<div class="c" style="left:426px;top:636px;width:70px;padding-left:3px">生产计划单</div>
<div class="c" style="left:497px;top:636px;width:70px;padding-left:3px"><span class="l">STZ<span class="d">2308170009</span></span></div>
<div class="c" style="left:568px;top:636px;width:70px;padding-left:3px"><span class="l"><span class="d">2023</span>-<span class="d">08</span>-<span class="d">17</span></span></div>
<div class="c" style="left:639px;top:636px;width:70px;text-align:right;padding-right:3px"><span class="l"><span class="d">250</span></span></div>
<div class="c" style="left:781px;top:636px;width:70px;text-align:right;padding-right:3px"><span class="l"><span class="d">250</span></span></div>
<div class="c" style="left:994px;top:636px;width:70px;padding-left:3px"><span class="l"><span class="d">0</span></span></div>
<div class="c" style="left:1136px;top:636px;width:70px;padding-left:3px"><span class="l"><span class="d">0</span>.<span class="d">0</span>%</span></div>
<div class="c" style="left:1207px;top:636px;width:70px;padding-left:3px">生产部</div>
<div class="c" style="left:1278px;top:636px;width:110px;padding-left:3px"><span class="l"><span class="d">4</span>Y<span class="d">40000127</span></span></div>
<div class="c" style="left:11px;top:660px;width:30px;padding-left:3px"><span class="l"><span class="d">21</span></span></div>
<div class="c" style="left:42px;top:660px;width:70px;padding-left:3px"><span class="l">LXX<span class="d">0199</span></span></div>
<div class="c" style="left:113px;top:660px;width:120px;padding-left:3px">小直流电机</div>
<div class="c" style="left:234px;top:660px;width:120px;padding-left:3px"><span class="l">T<span class="d">015</span>KCL<span class="d">14</span>SX<span class="d">01</span>_DQ-<span class="d">9</span></span></div>
<div class="c" style="left:355px;top:660px;width:70px;padding-left:3px">准备生产</div>
<div class="c" style="left:426px;top:660px;width:70px;padding-left:3px">生产计划单</div>
<div class="c" style="left:497px;top:660px;width:70px;padding-left:3px"><span class="l">STZ<span class="d">2308170010</span></span></div>
<div class="c" style="left:568px;top:660px;width:70px;padding-left:3px"><span class="l"><span class="d">2023</span>-<span class="d">08</span>-<span class="d">17</span></span></div>
<div class="c" style="left:639px;top:660px;width:70px;text-align:right;padding-right:3px"><span class="l"><span class="d">350</span></span></div>
<div class="c" style="left:781px;top:660px;width:70px;text-align:right;padding-right:3px"><span class="l"><span class="d">350</span></span></div>
<div class="c" style="left:994px;top:660px;width:70px;padding-left:3px"><span class="l"><span class="d">0</span></span></div>
<div class="c" style="left:1136px;top:660px;width:70px;padding-left:3px"><span class="l"><span class="d">0</span>.<span class="d">0</span>%</span></div>
<div class="c" style="left:1207px;top:660px;width:70px;padding-left:3px">生产部</div>
<div class="c" style="left:1278px;top:660px;width:110px;padding-left:3px"><span class="l"><span class="d">4</span>Y<span class="d">40000284</span></span></div>
<div class="c" style="left:11px;top:684px;width:30px;padding-left:3px"><span class="l"><span class="d">22</span></span></div>
<div class="c" style="left:42px;top:684px;width:70px;padding-left:3px"><span class="l">LXX<span class="d">0019</span></span></div>
<div class="c" style="left:113px;top:684px;width:120px;padding-left:3px">小直流电机</div>
<div class="c" style="left:234px;top:684px;width:120px;padding-left:3px"><span class="l">T<span class="d">15</span>ZYT<span class="d">01</span>_DQ-<span class="d">9</span></span></div>
<div class="c" style="left:355px;top:684px;width:70px;padding-left:3px">准备生产</div>
<div class="c" style="left:426px;top:684px;width:70px;padding-left:3px">生产计划单</div>
<div class="c" style="left:497px;top:684px;width:70px;padding-left:3px"><span class="l">STZ<span class="d">2308170011</span></span></div>
<div class="c" style="left:568px;top:684px;width:70px;padding-left:3px"><span class="l"><span class="d">2023</span>-<span class="d">08</span>-<span class="d">17</span></span></div>
<div class="c" style="left:639px;top:684px;width:70px;text-align:right;padding-right:3px"><span class="l"><span class="d">200</span></span></div>
<div class="c" style="left:781px;top:684px;width:70px;text-align:right;padding-right:3px"><span class="l"><span class="d">200</span></span></div>
<div class="c" style="left:994px;top:684px;width:70px;padding-left:3px"><span class="l"><span class="d">0</span></span></div>
<div class="c" style="left:1136px;top:684px;width:70px;padding-left:3px"><span class="l"><span class="d">0</span>.<span class="d">0</span>%</span></div>
<div class="c" style="left:1207px;top:684px;width:70px;padding-left:3px">生产部</div>
<div class="c" style="left:1278px;top:684px;width:110px;padding-left:3px"><span class="l"><span class="d">4</span>Y<span class="d">40000223</span></span></div>
<div class="c" style="left:11px;top:708px;width:30px;padding-left:2px">合计</div>
<div class="c" style="left:639px;top:708px;width:70px;text-align:right;padding-right:2px"><span class="l"><span class="d">54142</span></span></div>
<div class="c" style="left:781px;top:708px;width:70px;text-align:right;padding-right:2px"><span class="l"><span class="d">54142</span></span></div>
<div class="a" style="left:1457px;top:299px;width:66px;height:25px;border:1px solid #1d5fa8;background:#e8ffff"></div>
<div class="a" style="left:1458px;top:304px;width:64px;height:15px;background:#0078d7"></div>
<div class="a" style="left:0;top:748px;width:1599px;height:12px;background:#f0f0f0"></div>
<div class="a" style="left:2px;top:748px;width:4px;height:12px;background:#000"></div>
<svg class="a" style="left:11px;top:752px" width="7" height="8" viewBox="0 0 7 8"><path d="M5.5 0.8L1.8 4L5.5 7.2" stroke="#505050" stroke-width="1.8" fill="none"/></svg>
<div class="a" style="left:0;top:760px;width:1599px;height:1px;background:#d0d0d0"></div>
<div class="a" style="left:0;top:761px;width:1599px;height:6px;background:#f0f0f0"></div>
<div class="a" style="left:1357px;top:764px;width:6px;height:4px;border-radius:3px;border:1px solid #a8a8c0"></div>
<div class="a" style="left:1428px;top:765px;width:2px;height:2px;background:#444"></div>
<div class="a" style="left:1337px;top:761px;width:1px;height:6px;background:#c8c8c8"></div>
<div class="a" style="left:1382px;top:761px;width:1px;height:6px;background:#c8c8c8"></div>
<div class="a" style="left:1532px;top:761px;width:1px;height:6px;background:#c8c8c8"></div>
<div class="a" style="left:1566px;top:761px;width:1px;height:6px;background:#c8c8c8"></div>
<div class="a" style="left:1361px;top:130px;width:215px;height:593px;border:3px solid #e03c3c"></div>
</div></body></html>
